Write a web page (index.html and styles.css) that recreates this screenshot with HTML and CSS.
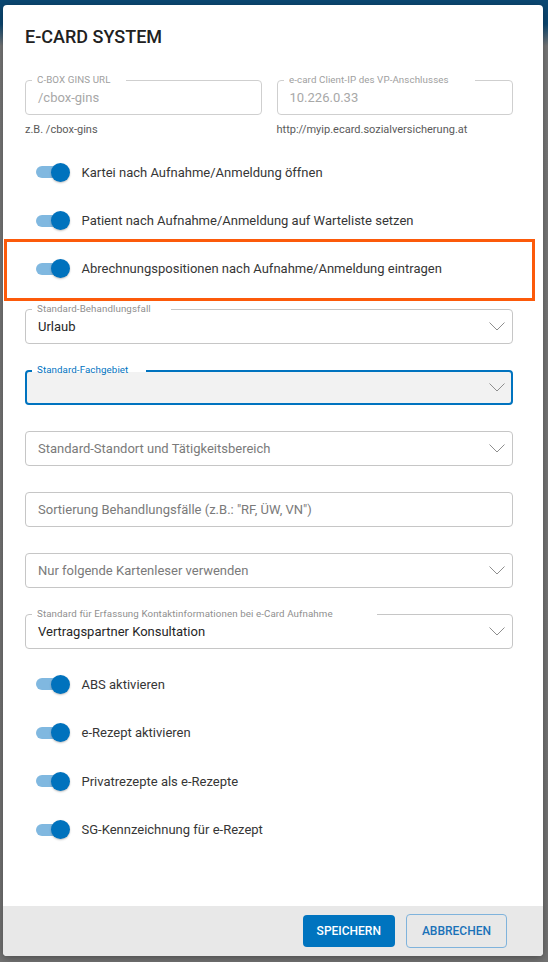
FILE: index.html
```html
<!DOCTYPE html>
<html lang="de">
<head>
  <meta charset="UTF-8" />
  <meta name="viewport" content="width=device-width, initial-scale=1.0"/>
  <title>E-Card System</title>
  <link rel="stylesheet" href="styles.css">
</head>
<body>
  <div class="dialog">
    <div class="dialog-body">
      <h2 class="dialog-title">E-CARD SYSTEM</h2>

      <div class="two-col">
        <div>
          <div class="field field-disabled">
            <span class="notch"><span>C-BOX GINS URL</span></span>
            <span class="field-value">/cbox-gins</span>
          </div>
          <div class="hint">z.B. /cbox-gins</div>
        </div>
        <div>
          <div class="field field-disabled">
            <span class="notch"><span>e-card Client-IP des VP-Anschlusses</span></span>
            <span class="field-value">10.226.0.33</span>
          </div>
          <div class="hint">http://myip.ecard.sozialversicherung.at</div>
        </div>
      </div>

      <div class="toggles">
        <div class="toggle-row">
          <span class="switch"></span>
          <span class="toggle-label">Kartei nach Aufnahme/Anmeldung öffnen</span>
        </div>
        <div class="toggle-row">
          <span class="switch"></span>
          <span class="toggle-label">Patient nach Aufnahme/Anmeldung auf Warteliste setzen</span>
        </div>
        <!-- marked row -->
        <div class="highlight">
          <div class="toggle-row">
            <span class="switch"></span>
            <span class="toggle-label">Abrechnungspositionen nach Aufnahme/Anmeldung eintragen</span>
          </div>
        </div>
      </div>

      <div class="fields">
        <div class="field select">
          <span class="notch"><span>Standard-Behandlungsfall</span></span>
          <span class="field-value">Urlaub</span>
          <svg class="chevron" width="16" height="9" viewBox="0 0 16 9"><path d="M0.5 0.5 L8 8 L15.5 0.5" fill="none" stroke="#8e8e8e" stroke-width="1"/></svg>
        </div>
        <div class="field select field-focused">
          <span class="notch"><span>Standard-Fachgebiet</span></span>
          <span class="field-value"></span>
          <svg class="chevron" width="16" height="9" viewBox="0 0 16 9"><path d="M0.5 0.5 L8 8 L15.5 0.5" fill="none" stroke="#8e8e8e" stroke-width="1"/></svg>
        </div>
        <div class="field select">
          <span class="field-value placeholder">Standard-Standort und Tätigkeitsbereich</span>
          <svg class="chevron" width="16" height="9" viewBox="0 0 16 9"><path d="M0.5 0.5 L8 8 L15.5 0.5" fill="none" stroke="#8e8e8e" stroke-width="1"/></svg>
        </div>
        <div class="field">
          <span class="field-value placeholder">Sortierung Behandlungsfälle (z.B.: "RF, ÜW, VN")</span>
        </div>
        <div class="field select">
          <span class="field-value placeholder">Nur folgende Kartenleser verwenden</span>
          <svg class="chevron" width="16" height="9" viewBox="0 0 16 9"><path d="M0.5 0.5 L8 8 L15.5 0.5" fill="none" stroke="#8e8e8e" stroke-width="1"/></svg>
        </div>
        <div class="field select">
          <span class="notch"><span>Standard für Erfassung Kontaktinformationen bei e-Card Aufnahme</span></span>
          <span class="field-value">Vertragspartner Konsultation</span>
          <svg class="chevron" width="16" height="9" viewBox="0 0 16 9"><path d="M0.5 0.5 L8 8 L15.5 0.5" fill="none" stroke="#8e8e8e" stroke-width="1"/></svg>
        </div>
      </div>

      <div class="toggles">
        <div class="toggle-row">
          <span class="switch"></span>
          <span class="toggle-label">ABS aktivieren</span>
        </div>
        <div class="toggle-row">
          <span class="switch"></span>
          <span class="toggle-label">e-Rezept aktivieren</span>
        </div>
        <div class="toggle-row">
          <span class="switch"></span>
          <span class="toggle-label">Privatrezepte als e-Rezepte</span>
        </div>
        <div class="toggle-row">
          <span class="switch"></span>
          <span class="toggle-label">SG-Kennzeichnung für e-Rezept</span>
        </div>
      </div>
    </div>

    <div class="dialog-footer">
      <button class="btn btn-primary">Speichern</button>
      <button class="btn btn-stroked">Abbrechen</button>
    </div>
  </div>
</body>
</html>
```

FILE: styles.css
```css
body {
  margin: 0;
  height: 962px;
  overflow: hidden;
  font-family: Roboto, "Noto Sans", sans-serif;
  background: linear-gradient(to bottom, #0b4873 0, #0b4873 24px, #797979 46px, #737373 100%);
}

.dialog {
  margin: 5px 5px 0 3px;
  height: 951px;
  background: #fff;
  border-radius: 4px;
  box-shadow: 0 2px 8px rgba(0, 0, 0, 0.35);
  display: flex;
  flex-direction: column;
  overflow: hidden;
}

.dialog-body {
  flex: 1;
  padding: 20px 30px 0 22px;
}

.dialog-title {
  margin: 0;
  font-size: 18px;
  line-height: 24px;
  font-weight: 500;
  color: #212121;
}

.two-col {
  margin-top: 31px;
  display: grid;
  grid-template-columns: 1fr 1fr;
  gap: 15px;
}

/* outlined fields */
.field {
  position: relative;
  box-sizing: border-box;
  height: 35px;
  border: 1px solid #c6c6c6;
  border-radius: 4px;
  padding: 0 12px;
  display: flex;
  align-items: center;
  background: #fff;
}

.field-value {
  flex: 1;
  font-size: 13px;
  color: #262626;
  white-space: nowrap;
}

.field-value.placeholder { color: #7a7a7a; }

.field-disabled { border-color: #cfcfcf; }
.field-disabled .field-value { color: #a8a8a8; }

.field-focused {
  border: 2px solid #0073bf;
  padding: 0 11px;
  background: #f2f2f2;
}

.notch {
  position: absolute;
  top: -7px;
  left: 6px;
  padding: 0 6px 0 5px;
  font-size: 11px;
  line-height: 12px;
  white-space: nowrap;
  background: linear-gradient(#fff 60%, transparent 60%);
}

.notch span {
  display: inline-block;
  transform: scale(0.886);
  transform-origin: left center;
  color: #8f8f8f;
  letter-spacing: 0.1px;
}

.field-disabled .notch span { color: #a0a0a0; }

.field-focused .notch {
  top: -8px;
  left: 5px;
  background: linear-gradient(#fff 70%, transparent 70%);
}

.field-focused .notch span { color: #0073bf; }

.chevron {
  margin-right: -5px;
}

.hint {
  margin-top: 8px;
  font-size: 11px;
  line-height: 14px;
  color: #5a5a5a;
}

/* toggles */
.toggles {
  margin-top: 11px;
}

.toggle-row {
  height: 48.5px;
  display: flex;
  align-items: center;
}

.switch {
  position: relative;
  width: 34px;
  height: 20px;
  margin-left: 11px;
  flex-shrink: 0;
}

.switch::before {
  content: "";
  position: absolute;
  left: 0;
  right: 2px;
  top: 4px;
  height: 12px;
  border-radius: 6px;
  background: #80b8e0;
}

.switch::after {
  content: "";
  position: absolute;
  right: 0;
  top: 0.5px;
  width: 19px;
  height: 19px;
  border-radius: 50%;
  background: #0072bd;
  box-shadow: 0 1px 2px rgba(0, 0, 0, 0.25);
}

.toggle-label {
  margin-left: 11.5px;
  font-size: 13px;
  color: #363636;
  white-space: nowrap;
}

.highlight {
  margin: -6.5px -22px 0 -21px;
  padding: 3px 0 5px 18px;
  border: 3px solid #fc5a0a;
}

.fields {
  margin-top: 8px;
  display: flex;
  flex-direction: column;
  gap: 26px;
}

/* footer */
.dialog-footer {
  height: 50px;
  background: #e8e8e8;
  display: flex;
  align-items: center;
  justify-content: flex-end;
  gap: 11px;
  padding-right: 36px;
}

.btn {
  box-sizing: border-box;
  height: 32px;
  padding: 0 14px;
  border-radius: 4px;
  font-family: Roboto, sans-serif;
  font-size: 12px;
  font-weight: 500;
  text-transform: uppercase;
  cursor: pointer;
}

.btn-primary {
  background: #0074bf;
  color: #fff;
  border: none;
  padding: 0 14px;
}

.btn-stroked {
  height: 34px;
  background: transparent;
  color: #1a72b8;
  border: 1px solid #7fb3dc;
  padding: 0 15px;
}
```
